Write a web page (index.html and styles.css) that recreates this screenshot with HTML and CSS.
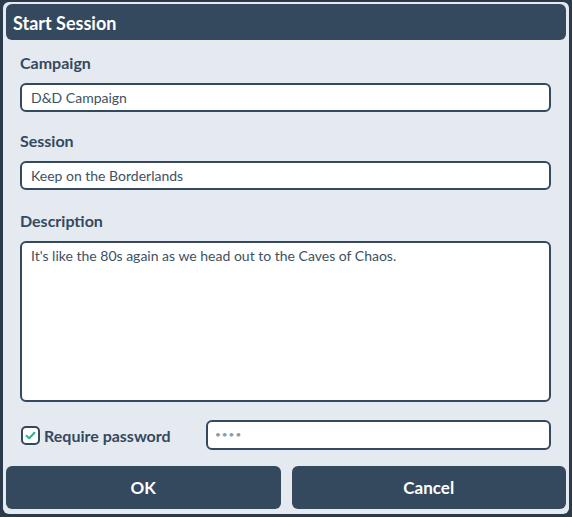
FILE: index.html
```html
<!DOCTYPE html>
<html>
<head>
<meta charset="utf-8">
<link rel="stylesheet" href="styles.css">
</head>
<body>
<div class="dialog">
  <div class="titlebar">Start Session</div>
  <div class="content">
    <div class="field">
      <div class="label">Campaign</div>
      <div class="input">D&amp;D Campaign</div>
    </div>
    <div class="field">
      <div class="label">Session</div>
      <div class="input">Keep on the Borderlands</div>
    </div>
    <div class="field field-desc">
      <div class="label">Description</div>
      <div class="textarea">It's like the 80s again as we head out to the Caves of Chaos.</div>
    </div>
    <div class="pwrow">
      <label class="check">
        <span class="box"><svg width="11" height="9" viewBox="0 0 11 9"><path d="M1.5 4.8 L4.2 7.2 L9.5 1.8" fill="none" stroke="#25b592" stroke-width="2" stroke-linecap="round" stroke-linejoin="round"/></svg></span>
        <span class="checklabel">Require password</span>
      </label>
      <div class="pwinput">••••</div>
    </div>
  </div>
  <div class="buttons">
    <div class="btn">OK</div>
    <div class="btn">Cancel</div>
  </div>
</div>
</body>
</html>
```
FILE: styles.css
```css
html, body {
  margin: 0;
  padding: 0;
  background: #2c3b4b;
}
body {
  width: 572px;
  height: 517px;
  padding: 2px 3px 3px 3px;
  box-sizing: border-box;
  font-family: Lato, "Open Sans", sans-serif;
}
.dialog {
  background: #e5eaf1;
  border-radius: 6px;
  height: 512px;
  padding: 2px 3px 5px 3px;
  box-sizing: border-box;
  display: flex;
  flex-direction: column;
}
.titlebar {
  background: #34495e;
  color: #ffffff;
  font-weight: 700;
  font-size: 18px;
  height: 36px;
  box-sizing: border-box;
  padding-top: 2px;
  line-height: 34px;
  padding-left: 7px;
  border-radius: 6px;
}
.content {
  padding: 14px 15px 0 14px;
  display: flex;
  flex-direction: column;
}
.field + .field {
  margin-top: 20px;
}
.field-desc {
  margin-top: 22px !important;
}
.label {
  font-size: 16px;
  font-weight: 700;
  line-height: 18px;
  color: #34495e;
  margin-bottom: 11px;
}
.input, .textarea, .pwinput {
  background: #ffffff;
  border: 2px solid #34495e;
  border-radius: 6px;
  box-sizing: border-box;
  color: #3e5163;
}
.input {
  height: 29px;
  line-height: 25px;
  padding-left: 9px;
  font-size: 14px;
}
.textarea {
  height: 161px;
  padding: 4px 9px;
  line-height: 18px;
  font-size: 14px;
}
.pwrow {
  margin-top: 18px;
  display: flex;
  align-items: center;
  height: 30px;
}
.check {
  display: flex;
  align-items: center;
  width: 185px;
  padding-left: 1px;
}
.box {
  width: 19px;
  height: 19px;
  box-sizing: border-box;
  border: 2px solid #34495e;
  border-radius: 5px;
  background: #ffffff;
  display: flex;
  align-items: center;
  justify-content: center;
}
.checklabel {
  margin-left: 4px;
  font-size: 16px;
  font-weight: 700;
  color: #34495e;
}
.pwinput {
  flex: 1;
  height: 30px;
  line-height: 25px;
  padding-left: 7px;
  color: #8d99a6;
  font-size: 10px;
  letter-spacing: 1px;
}
.buttons {
  margin-top: auto;
  display: flex;
  gap: 11px;
}
.btn {
  flex: 1;
  height: 43px;
  line-height: 43px;
  background: #34495e;
  color: #ffffff;
  text-align: center;
  font-weight: 700;
  font-size: 17px;
  border-radius: 6px;
}
```
